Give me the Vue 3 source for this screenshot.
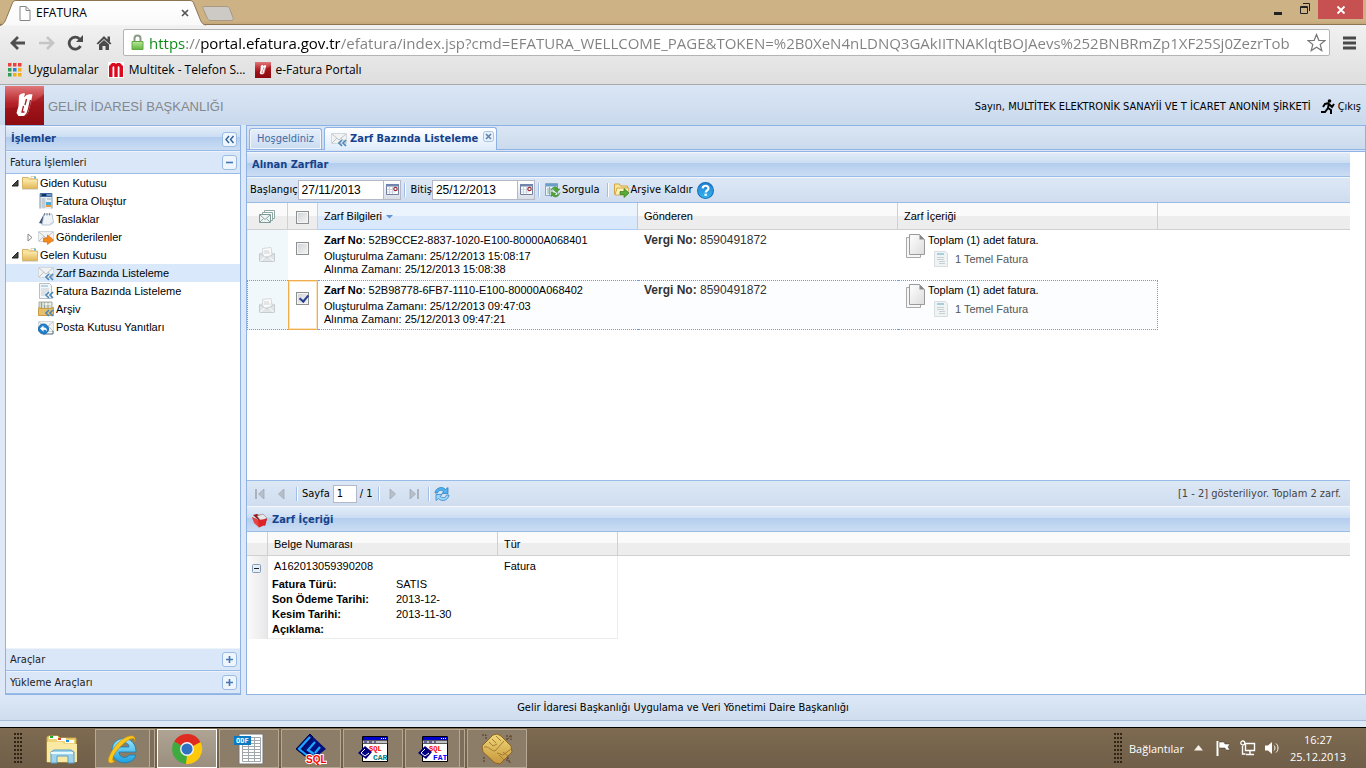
<script setup>
import { ref } from 'vue'

const url = ref('https://portal.efatura.gov.tr/efatura/index.jsp?cmd=EFATURA_WELLCOME_PAGE&TOKEN=%2B0XeN4nLDNQ3GAkIITNAKlqtBOJAevs%252BNBRmZp1XF25Sj0ZezrTob')
const start = ref('27/11/2013')
const end = ref('25/12/2013')
const page = ref('1')
const allChecked = ref(false)

const tree = [
  { label: 'Giden Kutusu', icon: 'folder', level: 0, arrow: 'open' },
  { label: 'Fatura Oluştur', icon: 'newspaper', level: 1 },
  { label: 'Taslaklar', icon: 'draft', level: 1 },
  { label: 'Gönderilenler', icon: 'sent', level: 1, arrow: 'closed' },
  { label: 'Gelen Kutusu', icon: 'folder', level: 0, arrow: 'open' },
  { label: 'Zarf Bazında Listeleme', icon: 'mailin', level: 1, selected: true },
  { label: 'Fatura Bazında Listeleme', icon: 'docin', level: 1 },
  { label: 'Arşiv', icon: 'archive', level: 1 },
  { label: 'Posta Kutusu Yanıtları', icon: 'reply', level: 1 }
]

const rows = ref([
  { no: '52B9CCE2-8837-1020-E100-80000A068401', created: '25/12/2013 15:08:17', received: '25/12/2013 15:08:38', tax: '8590491872', checked: false },
  { no: '52B98778-6FB7-1110-E100-80000A068402', created: '25/12/2013 09:47:03', received: '25/12/2013 09:47:21', tax: '8590491872', checked: true }
])

const details = [
  ['Fatura Türü:', 'SATIS'],
  ['Son Ödeme Tarihi:', '2013-12-'],
  ['Kesim Tarihi:', '2013-11-30'],
  ['Açıklama:', '']
]

const tasks = [
  { id: 'explorer', name: 'Dosya Gezgini', kind: 'plain', marks: [] },
  { id: 'ie', name: 'Internet Explorer', kind: 'stack', marks: [] },
  { id: 'chrome', name: 'Google Chrome', kind: 'active', marks: [] },
  { id: 'odf', name: 'ODF', kind: 'open', marks: [{ t: 'ODF', x: 3, y: 10, c: 'm-odf' }] },
  { id: 'diamond', name: 'SQL', kind: 'open', marks: [{ t: 'SQL', x: 11, y: 30, c: 'm-big' }] },
  { id: 'win', name: 'SQL CAR', kind: 'open', marks: [{ t: 'SQL', x: 12, y: 18, c: 'm-sql' }, { t: 'CAR', x: 16, y: 27, c: 'm-car' }] },
  { id: 'win', name: 'SQL FAT', kind: 'stack', marks: [{ t: 'SQL', x: 12, y: 18, c: 'm-sql' }, { t: 'FAT', x: 16, y: 27, c: 'm-fat' }] },
  { id: 'hands', name: 'Multitek', kind: 'open', marks: [] }
]
</script>

<template>
  <svg class="defs" aria-hidden="true">
    <defs>
      <linearGradient id="gFolder" x1="0" y1="0" x2="0" y2="1"><stop offset="0" stop-color="#fbe9a8" /><stop offset="1" stop-color="#e3b95c" /></linearGradient>
      <linearGradient id="gRed" x1="0" y1="0" x2="0" y2="1"><stop offset="0" stop-color="#e0787a" /><stop offset=".45" stop-color="#b52127" /><stop offset="1" stop-color="#8f0d14" /></linearGradient>
      <linearGradient id="gTab" x1="0" y1="0" x2="0" y2="1"><stop offset="0" stop-color="#ffffff" /><stop offset="1" stop-color="#f9f9f9" /></linearGradient>
      <linearGradient id="gPage" x1="0" y1="0" x2="1" y2="1"><stop offset="0" stop-color="#ffffff" /><stop offset="1" stop-color="#dcdcdc" /></linearGradient>
      <linearGradient id="gHelp" x1="0" y1="0" x2="0" y2="1"><stop offset="0" stop-color="#1f7fd0" /><stop offset="1" stop-color="#35b4f0" /></linearGradient>
      <linearGradient id="gLock" x1="0" y1="0" x2="0" y2="1"><stop offset="0" stop-color="#b9e89a" /><stop offset="1" stop-color="#5fb53c" /></linearGradient>
      <linearGradient id="gIe" x1="0" y1="0" x2="0" y2="1"><stop offset="0" stop-color="#9ce6fb" /><stop offset="1" stop-color="#1ba0df" /></linearGradient>
      <linearGradient id="gGold" x1="0" y1="0" x2="0" y2="1"><stop offset="0" stop-color="#f0d878" /><stop offset="1" stop-color="#c7973d" /></linearGradient>
    </defs>
    <symbol id="folder" viewBox="0 0 16 16"><path d="M.5 13.500v-11h6l1 1.500h8v9.500z" fill="url(#gFolder)" stroke="#d8b566" /><path d="M9 1.500h4v2H9z" fill="#fff" stroke="#d7b569" stroke-width=".6" /><path d="M12 1.500h2v2h-2z" fill="#62b5dc" /><path d="M1 5h14v8H1z" fill="url(#gFolder)" /><path d="M0 14.500h16" stroke="#ddd" /></symbol>
    <symbol id="newspaper" viewBox="0 0 16 16"><path d="M2 0h12v16H2z" fill="#eaf0f3" /><path d="M2 0h12v4H2z" fill="#3f69a0" /><path d="M4 1h4v2H4z" fill="#12335e" /><path d="M9 2h4" stroke="#a8c6e6" /><path d="M3.500 6h4M3.500 8h4M3.500 10h4M3.500 12h4M3.500 14h4M9 6h4" stroke="#9aa9b3" /><path d="M8 9h5v3H8z" fill="#4caad5" /><path d="M8 12h5v2H8z" fill="#e49b42" /><path d="M2 .5v15M14 .5v15" stroke="#8296a8" /></symbol>
    <symbol id="draft" viewBox="0 0 16 16"><path d="m1 12 5-9h2L5 13z" fill="#3a5078" /><path d="M6 3h8l1.500 8.500L12 14H4z" fill="#eff4f9" stroke="#a9b9cb" stroke-width=".8" /><path d="M12 14c0-2 1-3 3.500-2.500z" fill="#c5d0dd" /><path d="M6.500 2v2.500M9 2v2.500M11.500 2v2.500" stroke="#7b8798" /></symbol>
    <symbol id="envelope" viewBox="0 0 16 16"><path d="M.5 2.500h15v10H.5z" fill="#f0f2f4" stroke="#d3d8dc" /><path d="m1 3 7 6 7-6M1 12l5-5M15 12l-5-5" fill="none" stroke="#bcc4ca" /></symbol>
    <symbol id="chev" viewBox="0 0 16 16"><path d="m11 9-3 3 3 3M15 9l-3 3 3 3" fill="none" stroke="#4d86b8" stroke-width="1.700" /></symbol>
    <symbol id="sent" viewBox="0 0 16 16"><use href="#envelope" /><path d="M5.500 9h4V6l6 5-6 4.500V13h-4z" fill="#f58a1c" stroke="#dd6c0c" stroke-width=".7" /></symbol>
    <symbol id="mailin" viewBox="0 0 16 16"><use href="#envelope" /><use href="#chev" /></symbol>
    <symbol id="docin" viewBox="0 0 16 16"><path d="M1.500.5h10l2 2v13h-12z" fill="#f4f6f7" stroke="#b7c0c6" /><path d="M3 3h7" stroke="#7eb1cf" /><path d="M3 6h8M3 8h8M3 10h5M3 12h4" stroke="#c4cdd2" /><use href="#chev" /></symbol>
    <symbol id="archive" viewBox="0 0 16 16"><path d="M1 1h13v8H1z" fill="#d8ddd5" stroke="#a8afa4" /><path d="M3.500 1v6M6.500 1v6M10 1v6" stroke="#8fa091" /><path d="M6 3h7" stroke="#fff" /><path d="M.5 7.500h15v7H.5z" fill="#e6bf6b" stroke="#c99b45" /><path d="M.5 6h2v2h-2zM13 6h3v2h-3z" fill="#d3a751" /><use href="#chev" /></symbol>
    <symbol id="reply" viewBox="0 0 16 16"><use href="#envelope" /><path d="M5 15h10v-3" fill="none" stroke="#4a6276" /><circle cx="5.500" cy="10" r="5" fill="#1e83cf" stroke="#1765a9" /><path d="M2 9.500 5.500 6.500v2c3 0 3.500 2 3.500 4-.7-1.500-1.500-1.800-3.500-1.800v2z" fill="#fff" /></symbol>
    <symbol id="mails" viewBox="0 0 16 16"><path d="M5.500 1.500h10v8h-10z" fill="#fff" stroke="#8fa8a4" /><path d="M3.500 3.500h10v8h-10z" fill="#fff" stroke="#8fa8a4" /><path d="M.5 5.500h11v8H.5z" fill="#eef4f3" stroke="#7f9b97" /><path d="m1 6 5 4.500L11 6M1 13l3.500-3.500M11 13 7.500 9.500" fill="none" stroke="#8fa8a4" /></symbol>
    <symbol id="mailopen" viewBox="0 0 16 16"><path d="M1 7 4 4h8l3 3z" fill="#d8dbdd" /><path d="M3.500 1.500 12 .5l1 8-9 2z" fill="#fbfbfb" stroke="#d4d8da" /><path d="M5 4h5M5 6h6" stroke="#cbcfd1" /><path d="M.5 6.500 8 11l7.500-4.500v8H.5z" fill="#e2e5e7" stroke="#c6cbce" /><path d="m1 14.500 5-5M15 14.500l-5-5" stroke="#fff" /></symbol>
    <symbol id="sheet" viewBox="0 0 16 16"><path d="M.5 1.500h12v12H.5z" fill="#ecf4f8" stroke="#84a9c5" /><path d="M1 2h12v2.500H1z" fill="#6a9fca" /><path d="M2 7h6M2 9h6M2 11h6M4.500 5v8" stroke="#8bb19c" /><path d="M6 8c2-4 6-4 7-1h2l-3.500 3.500L8 7.500h2c-.5-1.500-2-1-4 .5zM15 10.500c-1 5-6 5.500-7.500 3L6 14.500l.5-4.500 4.500 1.500-1.500 1c1 1.500 3.500 1 5.500-2z" fill="#4ea536" stroke="#2c7a20" stroke-width=".4" /></symbol>
    <symbol id="folderout" viewBox="0 0 16 16"><path d="M.5 12V2h5l1 2h7v8z" fill="#fae69c" stroke="#d0a443" /><path d="M3 6h12l-2 7H1z" fill="#fdefb8" stroke="#d3aa4c" /><path d="M6 9.500h4V6.500l5 4.500-5 4.500v-3H6z" fill="#58ab37" stroke="#327c20" stroke-width=".7" /></symbol>
    <symbol id="help" viewBox="0 0 16 16"><circle cx="8" cy="8" r="7.500" fill="url(#gHelp)" stroke="#1872bd" /><path d="M5.300 6c.3-3.500 5.700-3 5.500 0 0 1.700-2.600 2-2.600 3.800" fill="none" stroke="#fff" stroke-width="2" /><path d="M7 11h2.300v2H7z" fill="#fff" /></symbol>
    <symbol id="logo" viewBox="0 0 39 39"><path d="M0 0h39v39H0z" fill="url(#gRed)" /><path d="M0 22C12 22 29 18 39 8v31H0z" fill="#8c0910" opacity=".45" /><path d="M14 10c1-2 3-3 6-2.500l-1 4c2-3 5-4 8.500-3l-1 5-3 12c-1 3-3 4.500-6 4.500h-4l-2-3 2-7z" fill="#fff" /><path d="m21.500 13-1.500 6M18.500 20l-1.500 6h2.500M20 30c2-2 3-4 3.500-7l2-9" fill="none" stroke="#a81c22" stroke-width="1.300" /></symbol>
    <symbol id="pages" viewBox="0 0 22 26"><path d="M1.500 4.500h14v20h-14z" fill="#f7f7f7" stroke="#a8a8a8" /><path d="M4.500 1.500h10l5 5v15h-15z" fill="url(#gPage)" stroke="#9a9a9a" /><path d="M14.500 1.500v5h5z" fill="#888" /></symbol>
    <symbol id="paper" viewBox="0 0 14 16"><path d="M.5.5h11l2 2v13H.5z" fill="#f0f3f4" stroke="#d8dddf" /><path d="M3 3h7" stroke="#a8cede" stroke-width="2" /><path d="M3 6.500h7M3 8.500h7M5 10.500h6M5 12.500h6" stroke="#c9d0d3" /></symbol>
    <symbol id="cal" viewBox="0 0 16 18"><path d="M2.500 3.500h12v10h-12z" fill="#fff" stroke="#7180a0" /><path d="M2 3h13v2.500H2z" fill="#7084ac" /><path d="M5.500 6v7M8.500 6v7M3 8.500h8M3 11h8" stroke="#cdd3df" /><circle cx="11.500" cy="8" r="1.700" fill="#fff" stroke="#9a2f33" stroke-width="1.200" /></symbol>
    <symbol id="refresh" viewBox="0 0 16 16"><path d="M1 7c.5-5 7-7.500 10.500-3.500L14 1.500v6H8L9.800 5.500C7 3.500 4.500 4 3.500 7z" fill="#53b2ee" stroke="#1f78c0" stroke-width=".7" /><path d="M15 9c-.5 5-7 7.500-10.500 3.500L2 14.500v-6h6l-1.800 2C9 12.500 11.500 12 12.500 9z" fill="#9ed7fa" stroke="#1f78c0" stroke-width=".7" /></symbol>
    <symbol id="redfolder" viewBox="0 0 16 16"><path d="m1 3 4-1 2 1 4-1 4 4-2 8z" fill="#8b1b1b" /><path d="m5 4 6-2 4 4-6 3z" fill="#e6e6e6" stroke="#999" stroke-width=".5" /><path d="M0 5 6 8l9-1-2 6-6 2.500z" fill="#dc2327" /><path d="m0 5 6 3 1 7.500L2 11z" fill="#e8433f" /></symbol>
    <symbol id="runner" viewBox="0 0 14 16"><circle cx="8.500" cy="2" r="1.800" /><path d="m8 4-4 1-2 3M8 4 7 9l3 2v4M7 9l-3 4H0M8 5l3 3 2-3" fill="none" stroke="#000" stroke-width="2" /></symbol>
    <symbol id="explorer" viewBox="0 0 32 30"><path d="M1 28V3l2-1h9l2 2h16v24z" fill="#efd477" stroke="#c7a646" /><path d="M3 2h9v3H3z" fill="#fff" /><path d="M4 2h3v2H4z" fill="#16ad31" /><path d="M11 4h9v3h-9z" fill="#fff" /><path d="M12 4h3v2h-3z" fill="#d6452b" /><path d="M19 6h9v3h-9z" fill="#fff" /><path d="M20 6h3v2h-3z" fill="#1f8fe0" /><path d="M1 8h15l2 2h13v18H1z" fill="#f9e9a3" /><path d="M5 29V18l3-2h17l3 2v11h-6v-7H11v7z" fill="#9fd3ed" stroke="#5a9fc5" /><path d="M5 19h22" stroke="#e6faff" stroke-width="2" /></symbol>
    <symbol id="ie" viewBox="0 0 32 32"><path d="M29 19H12c0 6 8 7 10 3h7c-4 12-24 10-24-5C5 2 29 1 29 19zM12 14h10c0-6-10-6-10 0z" fill="url(#gIe)" stroke="#147db5" stroke-width=".8" /><path d="M28 9c2-11-11-5-17 1S-2 29 3 30c2 .5 4-1 5-2-5 1-1-8 5-14S28 1 28 9z" fill="#fac51d" stroke="#bd8a10" stroke-width=".6" /></symbol>
    <symbol id="chrome" viewBox="0 0 30 30"><path d="M15 15 2.900 8A14 14 0 0 1 27.500 8.500z" fill="#df2b20" /><path d="M15 15 27.500 8.500A14 14 0 0 1 14 29z" fill="#fdc90a" /><path d="M15 15 14 29A14 14 0 0 1 2.900 8z" fill="#3faa3e" /><path d="M15 8.500h12.500L15 15z" fill="#df2b20" /><path d="m9.400 18.200 5.600-3-1 14z" fill="#3faa3e" /><circle cx="15" cy="15" r="6.500" fill="#f4f4f4" /><circle cx="15" cy="15" r="5.200" fill="#2f72c4" /></symbol>
    <symbol id="odf" viewBox="0 0 32 32"><path d="M6 1h24v30H6z" fill="#fff" stroke="#777" /><path d="M9.500 4.500h18v24h-18zM9.500 7.500h18M9.500 10.500h18M9.500 13.500h18M9.500 16.500h18M9.500 19.500h18M9.500 22.500h18M9.500 25.500h18M15.500 4v24M21.500 4v24" fill="none" stroke="#a0a6ac" /><path d="M1 3h17v9H1z" fill="#0b7ac4" /></symbol>
    <symbol id="diamond" viewBox="0 0 32 32"><path d="M15 1 31 16 16 28 1 16z" fill="#00107e" /><path d="M15 4 4 16l10 8M20 9l-7 8 6 4M25 14l-5 6" fill="none" stroke="#1aa7ff" stroke-width="2.200" /><path d="m15 1 3 3L7 16l9 7-1 4L1 16z" fill="none" stroke="#000050" /></symbol>
    <symbol id="win" viewBox="0 0 32 32"><path d="M5.500 3.500h25v25h-25z" fill="#fff" stroke="#000" /><path d="M6 4h24v3H6z" fill="#0000c8" /><path d="M24 5.500h6" stroke="#fff" stroke-dasharray="1 1" /><path d="M5.500 7.500h25v3h-25z" fill="#c0c0c0" stroke="#000" stroke-width=".6" /><path d="M7 9h12" stroke="#000080" stroke-dasharray="3 2" /><path d="m8 13 7 6-6 7-8-6z" fill="#000080" /><path d="m8 16-4 4 4 3 4-3" fill="none" stroke="#fff" /></symbol>
    <symbol id="hands" viewBox="0 0 32 32"><path d="m12 2 4-1 4 2 10 10 1 6-3 3-9 9-5-1L2 19l-1-6z" fill="url(#gGold)" stroke="#8d6425" /><path d="M3 14c5-1 7 4 11 4l9-10M8 9l4 4 4-2M11 6l4 4M15 3l5 5M30 16l-8 6-6-2M27 23l-5-4M23 27l-5-5" fill="none" stroke="#a57c33" /><path d="M1 2h4v4M26 2v5l4-5v5M3 24v5M28 25h-2v3h3v2" fill="none" stroke="#53351e" stroke-dasharray="2 1" /></symbol>
  </svg>

  <div class="screen">
    <header class="chrome">
      <div class="tabstrip">
        <div class="btab">
          <svg class="tabshape" width="236" height="26" aria-hidden="true"><path d="M0 25.500c4-1 5-4 7-9L12 4c1-3 2-3.500 5-3.500h172c3 0 4 .5 5 3.500l5 12.500c2 5 3 8 7 8.500" fill="url(#gTab)" stroke="#8d7452" /><path d="M204 6.500h22c2 0 3 1 3.500 2l3.500 9c.7 2 0 3-2 3h-20c-2 0-3-1-3.500-2l-4-9c-.7-2-1.500-2.500.5-3z" fill="#cdcac5" stroke="#a99982" /></svg>
          <svg class="fav" width="12" height="15" aria-hidden="true"><path d="M1 .5h6l4 4v10H1z" fill="#fff" stroke="#868686" /><path d="M7 .5v4h4" fill="none" stroke="#868686" /></svg>
          <span class="btitle">EFATURA</span>
          <button class="bclose" aria-label="Sekmeyi kapat"><svg width="8" height="8"><path d="m1 1 6 6M7 1 1 7" stroke="#555" stroke-width="1.700" /></svg></button>
        </div>
        <div class="winbtns">
          <button aria-label="Simge durumuna küçült"><svg width="12" height="12"><path d="M2 9h8v3H2z" fill="#222" /></svg></button>
          <button aria-label="Geri yükle"><svg width="12" height="12"><path d="M1.500 3.500h7v7h-7zM1 4.500h8M4 .5h6.500V8" fill="none" stroke="#222" /></svg></button>
          <button class="wclose" aria-label="Kapat"><svg width="10" height="10"><path d="m1.500 1.500 7 7M8.500 1.500l-7 7" stroke="#fff" stroke-width="1.800" /></svg></button>
        </div>
      </div>
      <div class="nav">
        <button aria-label="Geri"><svg width="18" height="16"><path d="M9 2 3 8l6 6M4 8h12" fill="none" stroke="#4f4f4f" stroke-width="2.800" /></svg></button>
        <button aria-label="İleri"><svg width="18" height="16"><path d="M1 8h13M9 2l6 6-6 6" fill="none" stroke="#c5c5c5" stroke-width="2.600" /></svg></button>
        <button aria-label="Yenile"><svg width="18" height="16"><path d="M13.500 11A6 6 0 1 1 12.500 4" fill="none" stroke="#4b4b4b" stroke-width="2.800" /><path d="M16 0v7H9z" fill="#4b4b4b" /></svg></button>
        <button aria-label="Giriş sayfası"><svg width="16" height="16"><path d="m8 1 7.500 7.500L14 9.500 8 4 2 9.500.5 8.500zM11.500 1.500h2.500v5h-2.500z" fill="#4b4b4b" /><path d="M3 9.500 8 5l5 4.500V15H9.500v-4h-3v4H3z" fill="#4b4b4b" /></svg></button>
        <div class="omni">
          <svg width="13" height="17" aria-hidden="true"><path d="M3.500 8V4.500c0-4 6-4 6 0V8" fill="none" stroke="#8b9a84" stroke-width="2" /><path d="M1 7.500h11v8H1z" fill="url(#gLock)" stroke="#62a845" /></svg>
          <input v-model="url" type="text" aria-label="Adres çubuğu" spellcheck="false" />
          <button aria-label="Yer işareti ekle"><svg width="19" height="19"><path d="m9.500 1.500 2.300 5.800 6.200.3-4.800 3.900 1.600 6.100-5.300-3.400-5.300 3.400 1.600-6.100L1 7.600l6.200-.3z" fill="#fff" stroke="#777" stroke-width="1.200" /></svg></button>
        </div>
        <button class="menu" aria-label="Menü"><svg width="14" height="14"><path d="M0 2h13M0 7h13M0 12h13" stroke="#484848" stroke-width="3" /></svg></button>
      </div>
      <nav class="marks" aria-label="Yer işaretleri">
        <a href="#apps"><svg width="14" height="14"><path d="M0 0h3.500v3.500H0zM5 0h3.500v3.500H5zM10 0h3.500v3.500H10z" fill="#ea4238" /><path d="M0 5h3.500v3.500H0z" fill="#2f9e54" /><path d="M5 5h3.500v3.500H5z" fill="#2b7de0" /><path d="M10 5h3.500v3.500H10zM5 10h3.500v3.500H5zM10 10h3.500v3.500H10z" fill="#f3ae1b" /><path d="M0 10h3.500v3.500H0z" fill="#2f9e54" /></svg>Uygulamalar</a>
        <a href="#multitek"><svg width="16" height="16"><path d="M0 0h16v16H0z" fill="#fff" /><path d="M1 15V4l3-3h3l1 1 1-1h3l3 3v11h-3.500V5l-1-1-.8 1v10H6.300V5l-.8-1-1 1v10z" fill="#dc0a20" /></svg>Multitek - Telefon S...</a>
        <a href="#efatura"><svg width="16" height="16"><use href="#logo" /></svg>e-Fatura Portalı</a>
      </nav>
    </header>

    <div class="app">
      <div class="apphead">
        <svg width="39" height="39" aria-hidden="true"><use href="#logo" /></svg>
        <span class="brand">GELİR İDARESİ BAŞKANLIĞI</span>
        <span class="who">Sayın, MULTİTEK ELEKTRONİK SANAYİİ VE T İCARET ANONİM ŞİRKETİ</span>
        <a class="exit" href="#cikis"><svg width="14" height="16"><use href="#runner" /></svg>Çıkış</a>
      </div>

      <div class="body">
        <aside class="side">
          <div class="ptitle">İşlemler<button class="tool" aria-label="Daralt"><svg width="11" height="11"><path d="m5 2-3 3.500L5 9M9.500 2l-3 3.500L9.500 9" fill="none" stroke="#2d5f9c" stroke-width="1.400" /></svg></button></div>
          <div class="acc">Fatura İşlemleri<button class="tool" aria-label="Kapat"><svg width="11" height="11"><path d="M2 5.500h7" stroke="#4377b1" stroke-width="1.600" /></svg></button></div>
          <ul class="tree">
            <li v-for="n in tree" :key="n.label" :class="['l' + n.level, { sel: n.selected }]">
              <span class="arrow">
                <svg v-if="n.arrow === 'open'" width="8" height="8"><path d="M7 1v6H1z" fill="#444" stroke="#222" /></svg>
                <svg v-if="n.arrow === 'closed'" width="8" height="9"><path d="m2 1 4 3.500L2 8z" fill="#fff" stroke="#888" /></svg>
              </span>
              <svg width="16" height="16" aria-hidden="true"><use :href="'#' + n.icon" /></svg>
              <a :href="'#' + n.icon">{{ n.label }}</a>
            </li>
          </ul>
          <div class="acc">Araçlar<button class="tool" aria-label="Araçlar aç"><svg width="11" height="11"><path d="M2 5.500h7M5.500 2v7" stroke="#4377b1" stroke-width="1.600" /></svg></button></div>
          <div class="acc">Yükleme Araçları<button class="tool" aria-label="Yükleme Araçları aç"><svg width="11" height="11"><path d="M2 5.500h7M5.500 2v7" stroke="#4377b1" stroke-width="1.600" /></svg></button></div>
        </aside>

        <main class="main">
          <div class="tabs">
            <button class="tab">Hoşgeldiniz</button>
            <div class="tab on">
              <svg width="16" height="16" aria-hidden="true"><use href="#mailin" /></svg>
              <button class="tabtext">Zarf Bazında Listeleme</button>
              <button class="x" aria-label="Sekmeyi kapat"><svg width="11" height="11"><rect x=".5" y=".5" width="10" height="10" rx="2" fill="#e8f1fb" stroke="#a9c3e4" /><path d="m3 3 5 5M8 3 3 8" stroke="#5d82ad" stroke-width="1.600" /></svg></button>
            </div>
          </div>

          <div class="content">
            <div class="ptitle">Alınan Zarflar</div>
            <div class="bar tools">
              <label for="bas">Başlangıç</label>
              <span class="date"><input id="bas" v-model="start" type="text" /><button aria-label="Başlangıç tarihi seç"><svg width="16" height="18"><use href="#cal" /></svg></button></span>
              <i class="sep"></i>
              <label for="bit">Bitiş</label>
              <span class="date"><input id="bit" v-model="end" type="text" /><button aria-label="Bitiş tarihi seç"><svg width="16" height="18"><use href="#cal" /></svg></button></span>
              <i class="sep"></i>
              <button class="tbtn"><svg width="16" height="16"><use href="#sheet" /></svg>Sorgula</button>
              <i class="sep"></i>
              <button class="tbtn"><svg width="16" height="16"><use href="#folderout" /></svg>Arşive Kaldır</button>
              <button class="tbtn" aria-label="Yardım"><svg width="17" height="17"><use href="#help" /></svg></button>
            </div>

            <div class="gridwrap">
              <table class="grid">
                <colgroup><col class="c1" /><col class="c2" /><col class="c3" /><col class="c4" /><col class="c4" /><col /></colgroup>
                <thead>
                  <tr>
                    <th class="mid" aria-label="Durum"><svg width="16" height="16"><use href="#mails" /></svg></th>
                    <th class="mid"><input v-model="allChecked" type="checkbox" aria-label="Tümünü seç" /></th>
                    <th class="sorted">Zarf Bilgileri<svg width="9" height="6"><path d="M1 1h7L4.500 4.500z" fill="#5d94d6" /></svg></th>
                    <th>Gönderen</th>
                    <th>Zarf İçeriği</th>
                    <th class="fill"></th>
                  </tr>
                </thead>
                <tbody>
                  <tr v-for="r in rows" :key="r.no" :class="{ picked: r.checked }">
                    <td class="state"><svg width="16" height="16" aria-hidden="true"><use href="#mailopen" /></svg></td>
                    <td class="check"><input v-model="r.checked" type="checkbox" :aria-label="'Zarf ' + r.no" /></td>
                    <td class="info">
                      <p class="first"><b>Zarf No</b>: {{ r.no }}</p>
                      <p>Oluşturulma Zamanı: {{ r.created }}</p>
                      <p>Alınma Zamanı: {{ r.received }}</p>
                    </td>
                    <td class="tax"><b>Vergi No:</b> {{ r.tax }}</td>
                    <td class="sum">
                      <div class="sumbox">
                        <svg width="22" height="26" aria-hidden="true"><use href="#pages" /></svg>
                        <div><p>Toplam (1) adet fatura.</p><p class="kind"><svg width="14" height="16" aria-hidden="true"><use href="#paper" /></svg>1 Temel Fatura</p></div>
                      </div>
                    </td>
                    <td class="fill"></td>
                  </tr>
                </tbody>
              </table>
            </div>

            <div class="bar pager">
              <button class="pg" aria-label="İlk sayfa"><svg width="12" height="12"><path d="M2 1v10" stroke="#aab2bd" stroke-width="2" /><path d="M10 1v10L4.500 6z" fill="#b8bfc9" stroke="#99a3b1" stroke-width=".7" /></svg></button>
              <button class="pg" aria-label="Önceki sayfa"><svg width="12" height="12"><path d="M8 1v10L2.500 6z" fill="#b8bfc9" stroke="#99a3b1" stroke-width=".7" /></svg></button>
              <i class="sep"></i>
              <label for="sayfa">Sayfa</label><input id="sayfa" v-model="page" class="pno" type="text" /><span class="of">/ 1</span>
              <i class="sep"></i>
              <button class="pg" aria-label="Sonraki sayfa"><svg width="12" height="12"><path d="M4 1v10L9.500 6z" fill="#b8bfc9" stroke="#99a3b1" stroke-width=".7" /></svg></button>
              <button class="pg" aria-label="Son sayfa"><svg width="12" height="12"><path d="M2 1v10L7.500 6z" fill="#b8bfc9" stroke="#99a3b1" stroke-width=".7" /><path d="M10 1v10" stroke="#aab2bd" stroke-width="2" /></svg></button>
              <i class="sep"></i>
              <button class="pg" aria-label="Yenile"><svg width="16" height="16"><use href="#refresh" /></svg></button>
              <span class="count">[1 - 2] gösteriliyor. Toplam 2 zarf.</span>
            </div>

            <section class="lower">
              <div class="ptitle icon"><svg width="16" height="16" aria-hidden="true"><use href="#redfolder" /></svg>Zarf İçeriği</div>
              <table class="grid low">
                <colgroup><col class="d1" /><col class="d2" /><col class="d3" /><col /></colgroup>
                <thead><tr><th aria-label="Aç"></th><th>Belge Numarası</th><th>Tür</th><th class="fill"></th></tr></thead>
                <tbody>
                  <tr>
                    <td class="expander"><button aria-label="Daralt"><svg width="9" height="9"><rect x=".5" y=".5" width="8" height="8" rx="1" fill="#e8eef5" stroke="#7f9db9" /><path d="M2 4.500h5" stroke="#222" /></svg></button></td>
                    <td class="num">A162013059390208</td>
                    <td class="num end">Fatura</td>
                    <td class="fill"></td>
                  </tr>
                  <tr>
                    <td class="expander"></td>
                    <td colspan="2" class="det">
                      <dl><template v-for="d in details" :key="d[0]"><dt>{{ d[0] }}</dt><dd>{{ d[1] }}</dd></template></dl>
                    </td>
                    <td class="fill"></td>
                  </tr>
                </tbody>
              </table>
            </section>
          </div>
        </main>
      </div>
      <footer class="foot">Gelir İdaresi Başkanlığı Uygulama ve Veri Yönetimi Daire Başkanlığı</footer>
    </div>

    <div class="taskbar">
      <i class="grip"></i>
      <button v-for="t in tasks" :key="t.name" :class="['task', t.kind]" :aria-label="t.name">
        <svg width="32" height="32"><use :href="'#' + t.id" /><text v-for="m in t.marks" :key="m.t" :x="m.x" :y="m.y" :class="m.c">{{ m.t }}</text></svg>
      </button>
      <div class="tray">
        <i class="grip"></i>
        <span class="links">Bağlantılar</span>
        <button class="up" aria-label="Gizli simgeler"><svg width="9" height="6"><path d="m4.500 0 4.500 5.500H0z" fill="#f4f0ea" /></svg></button>
        <button aria-label="İşlem merkezi"><svg width="17" height="16"><path d="M2.500 1v15" stroke="#fff" stroke-width="2" /><path d="M4 2h5l1 2h5l-2 3 2 3h-4l-1-2H4z" fill="#fff" stroke="#3c342a" stroke-width=".5" /></svg></button>
        <button aria-label="Ağ"><svg width="16" height="16"><path d="M5.500 3.500h9v7h-9zM10 11v3M6 14.500h8M2.500 6v8h3" fill="none" stroke="#fff" stroke-width="1.400" /><circle cx="2.800" cy="3" r="2" fill="#7a684f" stroke="#fff" stroke-width="1.300" /></svg></button>
        <button aria-label="Ses"><svg width="16" height="14"><path d="M1 4.500h3L8 1v12L4 9.500H1z" fill="#fff" /><path d="M10 4.500c1.300 1.300 1.300 3.700 0 5M12 2.500c2.700 2.500 2.700 6.500 0 9" fill="none" stroke="#fff" /></svg></button>
        <time>16:27<br />25.12.2013</time>
      </div>
    </div>
  </div>
</template>

<style>
body { margin: 0; background: #fff; }
</style>

<style scoped>
* { box-sizing: border-box; }
.defs { position: absolute; width: 0; height: 0; }
.screen { display: flex; flex-direction: column; min-height: 100vh; font: 11px/14px "DejaVu Sans Condensed", "Liberation Sans", sans-serif; color: #000; }
button { display: inline-flex; align-items: center; justify-content: center; margin: 0; padding: 0; border: 0; background: none; font: inherit; color: inherit; }
input { margin: 0; font: inherit; color: inherit; }
svg { display: block; flex: none; }
a { color: inherit; text-decoration: none; }
p { margin: 0; }

.chrome { font: 12px/16px "Open Sans", "Noto Sans", sans-serif; border-bottom: 1px solid #a9a9a9; background: linear-gradient(#f9f9f9, #dedede); }
.tabstrip { display: flex; justify-content: space-between; height: 25px; background: linear-gradient(#cdb285 85%, #c3a77c); border-bottom: 1px solid #8d7452; }
.btab { position: relative; display: flex; align-items: center; width: 206px; padding: 2px 17px 0 19px; }
.tabshape { position: absolute; left: 0; top: 0; }
.fav, .btitle, .bclose { position: relative; }
.btitle { margin-left: 5px; }
.bclose { margin-left: auto; }
.winbtns { display: flex; align-items: flex-start; padding-right: 3px; }
.winbtns button { width: 27px; height: 18px; }
.winbtns .wclose { width: 45px; height: 19px; background: #c75050; }
.nav { display: flex; align-items: center; gap: 11px; padding: 4px 9px 0; }
.omni { flex: 1; display: flex; align-items: center; gap: 5px; height: 27px; min-width: 0; padding: 0 3px 0 7px; background: #fff; border: 1px solid #b4b4b4; border-radius: 2px; }
.omni input { flex: 1; min-width: 0; padding: 0; border: 0; outline: 0; font-size: 15px; line-height: 22px; color: transparent; background: linear-gradient(90deg, #0a8a12 37px, #808080 37px, #808080 51px, #000 51px, #000 191px, #808080 191px); -webkit-background-clip: text; background-clip: text; }
.menu { margin-left: 2px; }
.marks { display: flex; gap: 9px; padding: 5px 8px 6px; }
.marks a { display: flex; align-items: center; gap: 5px; height: 17px; }
.marks a:first-child { gap: 6px; }

.app { flex: 1; display: flex; flex-direction: column; background: #dfe8f6; }
.apphead { display: flex; align-items: center; height: 40px; padding: 1px 5px 0; background: linear-gradient(#dae6f5, #c9d9ec); }
.brand { margin: 2px 0 0 4px; font: 13px/16px "Liberation Sans", sans-serif; color: #84878c; }
.who { margin: 2px 0 0 auto; }
.exit { display: flex; align-items: center; gap: 3px; margin: 2px 0 0 10px; }
.body { flex: 1; display: grid; grid-template-columns: 236px minmax(0, 1fr); gap: 5px; padding-left: 5px; }
.side { display: flex; flex-direction: column; border: 1px solid #8db2e3; background: #fff; }
.ptitle { display: flex; align-items: center; height: 25px; padding: 1px 3px 0 5px; font: bold 11px/14px "DejaVu Sans Condensed", sans-serif; color: #15428b; background: linear-gradient(#e2ecf8, #cbddf3 45%, #b3cdee 45%, #cbddf3); border-bottom: 1px solid #99bbe8; border-top: 1px solid #f4f8fd; }
.tool { width: 15px; height: 15px; margin-left: auto; border: 1px solid #9abbe4; border-radius: 3px; background: #eef5fd; }
.acc { display: flex; align-items: center; height: 23px; padding: 0 3px 0 4px; color: #222; background: #d9e7f8; border-top: 1px solid #ecf3fb; border-bottom: 1px solid #99bbe8; }
.tree { flex: 1; margin: 0; padding: 0; list-style: none; font-family: "Liberation Sans", sans-serif; }
.tree li { display: flex; align-items: center; height: 18px; }
.tree .l1 { padding-left: 16px; }
.tree .sel { background: #d9e8fb; }
.arrow { display: flex; justify-content: flex-end; width: 13px; margin-right: 3px; }
.l1 .arrow { width: 12px; margin-right: 4px; }
.tree a { margin-left: 2px; }

.main { display: flex; flex-direction: column; min-width: 0; border: 1px solid #8db2e3; background: #fff; }
.tabs { display: flex; align-items: flex-end; gap: 2px; height: 26px; padding: 0 2px; background: linear-gradient(#dae6f5, #cbdaec); border-bottom: 3px double #8db2e3; }
.tab { height: 21px; padding: 0 7px; color: #416aa3; border: 1px solid #8db2e3; border-bottom: 0; border-radius: 3px 3px 0 0; background: linear-gradient(#e6effa, #cbdcf1); box-shadow: inset 0 0 0 1px #f2f7fd; }
.tab.on { display: flex; align-items: center; height: 23px; margin-bottom: -1px; padding: 0 2px 1px 6px; font-weight: bold; color: #15428b; background: linear-gradient(#fff, #deecfd); box-shadow: none; }
.tabtext { margin: 0 5px 0 3px; }
.x { align-self: flex-start; margin-top: 3px; }
.content { flex: 1; display: flex; flex-direction: column; margin-right: 15px; }
.bar { display: flex; align-items: center; height: 26px; background: linear-gradient(#dde8f6, #cfddef); border-bottom: 1px solid #99bbe8; border-top: 1px solid #f4f8fd; }
.tools { padding-left: 3px; }
.date { display: flex; height: 20px; }
.date input { width: 86px; padding: 0 3px; border: 1px solid #b5b8c8; font: 12px/16px "Liberation Sans", sans-serif; outline: 0; background: #fff; }
.date button { width: 17px; border: 1px solid #b5b8c8; border-left: 0; background: linear-gradient(#fff, #d7dce6); }
.sep { width: 2px; height: 14px; margin: 0 5px 0 3px; background: linear-gradient(90deg, #9fbfe8 50%, #fff 50%); }
.tbtn { margin-right: 4px; gap: 1px; }
.gridwrap { flex: 1; }
.grid { width: 100%; border-collapse: separate; border-spacing: 0; table-layout: fixed; font-family: "Liberation Sans", sans-serif; }
.c1 { width: 41px; } .c2 { width: 30px; } .c3 { width: 320px; } .c4 { width: 260px; }
.d1 { width: 21px; } .d2 { width: 230px; } .d3 { width: 120px; }
.grid th { height: 27px; padding: 0 6px; text-align: left; font-weight: normal; background: linear-gradient(#fafafa 50%, #ededee 50%); border-bottom: 1px solid #d0d0d0; border-right: 1px solid #d0d0d0; }
.grid th.sorted { background: linear-gradient(#ebf3fd 50%, #d9e8fb 50%); border-right-color: #aaccf6; border-bottom-color: #aaccf6; }
.sorted svg { display: inline-block; margin-left: 3px; }
.grid th.mid { padding: 0; }
.mid > * { margin: 2px auto 0; display: block; }
.grid th.fill { border-right: 0; }
.grid td { padding: 0; vertical-align: top; }
.grid:not(.low) tbody td { height: 50px; }
.grid tbody tr:not(.picked) .state { border-left: 1px solid #ededed; }
.picked td:not(.fill) { border-top: 1px dotted #6f9ae6; border-bottom: 1px dotted #6f9ae6; background: #fbfdff; }
.picked .state { border-left: 1px dotted #6f9ae6; }
.picked .sum { border-right: 1px dotted #6f9ae6; }
.grid tbody .state { padding: 17px 0 0 11px; background: #f0f8fc; }
.grid tbody .check { padding: 12px 0 0 8px; }
.grid .picked .check { padding: 11px 0 0 7px; border: 1px solid #efad4b; background: #fff; box-shadow: inset 0 0 0 1px #fbe3bd; }
input[type="checkbox"] { display: block; width: 13px; height: 13px; appearance: none; border: 1px solid #8e8f8f; background: linear-gradient(135deg, #cfd3d7, #f4f4f4); box-shadow: inset 0 0 0 1px #f4f4f4; }
input[type="checkbox"]:checked::before { content: ""; display: block; width: 4px; height: 7px; margin: 0 0 0 4px; border: solid #2b3f92; border-width: 0 2px 2px 0; transform: rotate(40deg); }
.grid .info { padding: 4px 6px 0; line-height: 13px; }
.grid .picked .info { padding-top: 3px; }
.info .first { margin-bottom: 3px; }
.grid .tax { padding: 3px 6px 0; font-size: 12px; line-height: 15px; color: #333; }
.grid .sum { padding: 3px 6px 0 7px; }
.grid .picked .tax, .grid .picked .sum { padding-top: 2px; }
.sumbox { display: flex; gap: 1px; }
.kind { display: flex; align-items: center; gap: 7px; margin: 4px 0 0 6px; color: #555; }
.pager { padding: 0 9px 0 5px; border-top: 1px solid #99bbe8; border-bottom: 0; }
.pg { width: 16px; height: 16px; margin-right: 6px; }
.pager .sep { margin: 0 4px 0 0; }
.pno { width: 24px; height: 18px; margin: 0 3px; padding: 0 3px; border: 1px solid #b5b8c8; background: #fff; }
.of { margin-right: 5px; }
.count { margin-left: auto; color: #444; }
.lower { min-height: 188px; }
.ptitle.icon { gap: 4px; height: 26px; }
.low th { height: 24px; }
.low .expander { padding: 6px 0 0 5px; background: linear-gradient(90deg, #fafafa, #e8e8ea); border-right: 1px solid #e2e2e2; }
.grid .num { padding: 3px 6px 0; }
.low .end, .low .det { border-right: 1px solid #ededed; }
.grid .det { padding: 1px 4px; border-bottom: 1px solid #ededed; }
dl { display: grid; grid-template-columns: 124px 1fr; grid-auto-rows: 15px; margin: 0; line-height: 15px; }
dt { font-weight: bold; }
dd { margin: 0; }
.foot { height: 32px; padding-top: 6px; text-align: center; background: linear-gradient(#dce8f6, #cfddef 25px, #a5bdd8 25px, #a5bdd8 26px, #dfe8f6 26px); }

.taskbar { display: flex; align-items: stretch; height: 41px; padding-left: 14px; border-top: 1px solid #000; background: linear-gradient(#7d6a50, #705e49); color: #fff; }
.grip { align-self: center; width: 9px; height: 30px; background: repeating-linear-gradient(#2f2517 0 2px, transparent 2px 4px); mask: repeating-linear-gradient(90deg, #000 0 2px, transparent 2px 3px); }
.task { width: 60px; margin: 1px 2px 0 0; border: 1px solid #b5a996; background: #8c7d69; }
.task.plain { width: 70px; padding-left: 8px; border: 0; background: none; }
.task.stack { padding-right: 5px; box-shadow: inset -4px 0 0 #7d6e5b, inset -5px 0 0 #b5a996; }
.task.active { border-color: #fff; background: linear-gradient(#afa393, #9a8e7e); }
.task text { font: bold 8px "Liberation Mono", monospace; }
.task .m-odf { font: bold 7px "DejaVu Sans Mono", monospace; fill: #fff; }
.task .m-big { font: bold 10px "Liberation Sans", sans-serif; fill: #f00; stroke: #fff; stroke-width: 2px; paint-order: stroke; }
.task .m-sql { font-size: 7px; fill: #f00; }
.m-car { fill: #008080; }
.m-fat { fill: #00f; }
.tray { display: flex; align-items: center; gap: 8px; margin-left: auto; padding-right: 20px; font: 11px/17px "Open Sans", "Noto Sans", sans-serif; }
.links { margin: 0 2px 0 -2px; }
.up { margin-right: 4px; }
.tray time { margin-left: 2px; text-align: center; }
</style>
